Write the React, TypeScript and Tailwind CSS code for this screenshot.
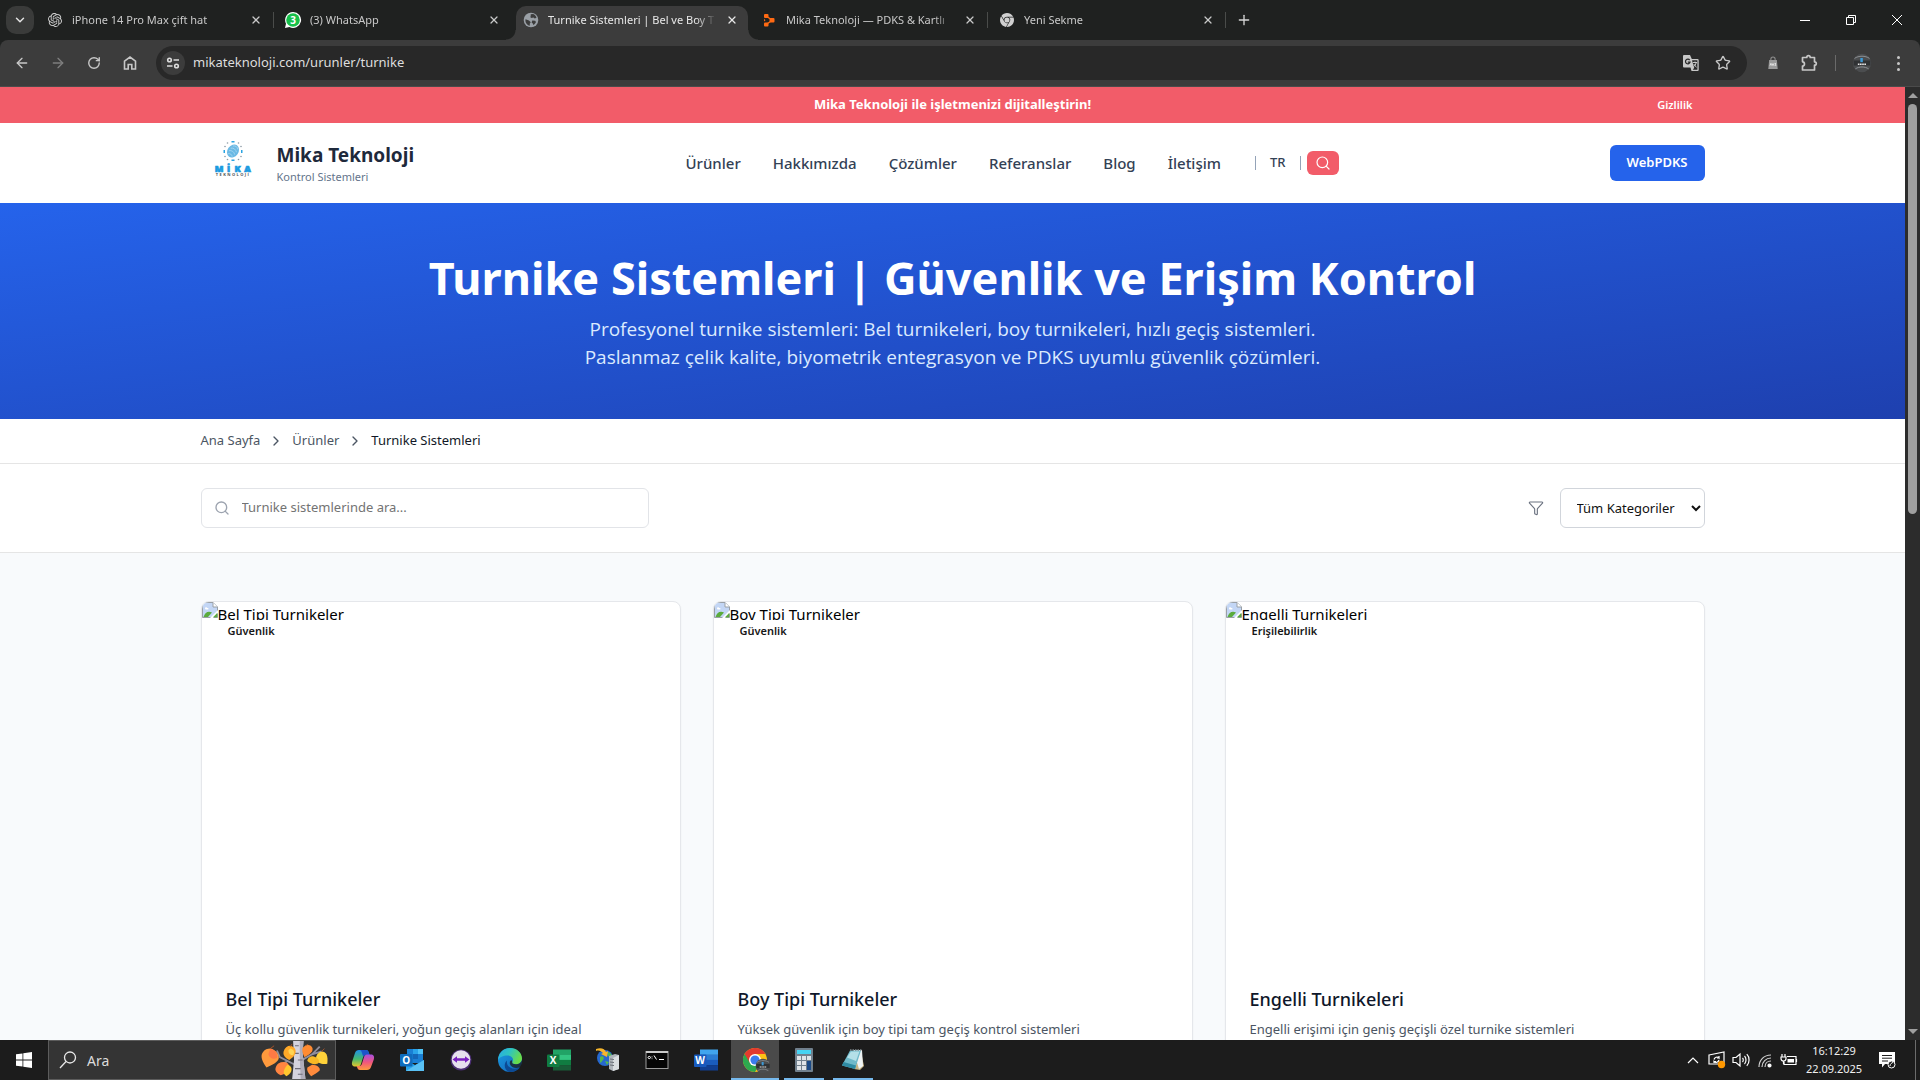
import type { ReactNode } from "react";
import { ChevronRight, Filter, Search, Star, X, ArrowLeft, ArrowRight, RotateCw, Plus, ChevronDown } from "lucide-react";
import { SiGooglechrome, SiOpenai } from "react-icons/si";

/* ---------- browser icons ---------- */

const WhatsAppIcon = () => (
  <svg viewBox="0 0 18 18" className="size-[18px]">
    <path d="M9 1a8 8 0 1 1-3.6 15.1L1 17l1-4.300A8 8 0 0 1 9 1Z" fill="#fff" />
    <circle cx="9" cy="9" r="6.800" fill="#16c04a" />
    <text x="9" y="12.500" textAnchor="middle" fontSize="10" fontWeight="700" fill="#fff" fontFamily="Noto Sans, sans-serif">3</text>
  </svg>
);

const GlobeIcon = () => (
  <svg viewBox="0 0 16 16" className="size-4">
    <circle cx="8" cy="8" r="7.300" fill="#9aa0a6" />
    <path d="M2.500 7.200 6 8.500l1.800 1.700-1 1.300v2.300C4 13 2 10.800 2.500 7.200Zm5.200-4.900 2.400-.3c1.700.6 3 2 3.400 3.700l-1.700.9-1.400-1-1.800.5-1.300-.9.400-1.300Zm1.600 6.100 2.800.3.900 1.300c-.7 1.500-1.500 2.300-2.600 2.900l-.6-1.500-1.200-1Z" fill="#3c3c3c" />
  </svg>
);

const OrangeMark = () => (
  <svg viewBox="0 0 16 16" className="size-4 fill-[#ff6a13]">
    <rect x="3" y="2" width="4.500" height="4" rx="1" />
    <rect x="3" y="10.500" width="4.500" height="4" rx="1" />
    <rect x="8.500" y="6" width="5" height="4.500" rx="1" />
    <path d="M6.500 5 9.500 7M6.500 11.500 9.500 9.500" stroke="#ff6a13" strokeWidth="1.500" />
    <path d="M3 6.800 4.500 8.200 3 9.600Z" />
  </svg>
);

const HomeIcon = () => (
  <svg viewBox="0 0 16 16" className="size-4" fill="none" stroke="currentColor" strokeWidth="1.600">
    <path d="M2.500 14V6.200L8 2l5.500 4.200V14H9.800V9.500H6.200V14Z" />
  </svg>
);

const TuneIcon = () => (
  <svg viewBox="0 0 16 16" className="size-4" fill="none" stroke="currentColor" strokeWidth="1.600">
    <circle cx="4.500" cy="5" r="1.800" />
    <path d="M8.500 5H14M2 11h5.500" />
    <circle cx="11.500" cy="11" r="1.800" />
  </svg>
);

const TranslateIcon = () => (
  <svg viewBox="0 0 18 18" className="size-[18px]">
    <path d="M2 1h6l1.800 4H15.500a1.200 1.200 0 0 1 1.200 1.200V16a1 1 0 0 1-1 1H9.500L8.500 13.500H2A1 1 0 0 1 1 12.500V2a1 1 0 0 1 1-1Z" fill="#c7c7c7" />
    <path d="M10.200 6.300h5.200v9.400h-4.600l1.400-2-2-6.500Z" fill="#282828" />
    <path d="M7.700 6.200A2.300 2.300 0 1 0 8 8.200H5.800" fill="none" stroke="#282828" strokeWidth="1.200" />
    <path d="M10.800 8.500h4.300M13 7.500v1M14.200 8.700c-.5 2-1.500 3.200-2.700 4M11.800 10c.7 1.300 1.500 2.300 2.800 3.200" fill="none" stroke="#c7c7c7" strokeWidth="1" />
  </svg>
);

const BagIcon = () => (
  <svg viewBox="0 0 14 16" className="h-3.5 w-3">
    <path d="M4.500 5V3.500a2.500 2.500 0 0 1 5 0V5" fill="none" stroke="#8b8b8b" strokeWidth="1.300" />
    <path d="M2.500 4.500h9l1 10.500h-11Z" fill="#9b9b9b" />
    <path d="M3.500 11l1-2.500 1 2.500M6 8.500l1 2.500 1-2.500M10.500 8.700H9.200l1 2.100H8.800" fill="none" stroke="#fff" strokeWidth=".8" />
  </svg>
);

const PuzzleIcon = () => (
  <svg viewBox="0 0 18 18" className="size-[18px]" fill="none" stroke="#c7c7c7" strokeWidth="1.700" strokeLinejoin="round">
    <path d="M2.500 3.500h4.300c0-2.400 3.400-2.400 3.400 0H14.500v4.300c2.400 0 2.400 3.400 0 3.400V16h-12v-4c2.600-.2 2.600-4 0-4.200Z" />
  </svg>
);

const ProfileBadge = ({ className }: { className: string }) => (
  <svg viewBox="0 0 24 24" className={className}>
    <circle cx="12" cy="12" r="11" fill="#4b4d4f" />
    <path d="M3 6.500C8 3 16 3 21 6.500M4 19c5-3 11-3 16 0" stroke="#8d9093" strokeWidth="1.200" fill="none" />
    <path d="M2 9h20v6H2Z" fill="#303234" />
    <path d="M10 6h3v5h-3Z" fill="#3c9ad8" />
    <path d="M7 13.500h10" stroke="#e6e6e6" strokeWidth="1.800" strokeDasharray="2 .6" />
  </svg>
);

const BrokenImage = () => (
  <svg viewBox="0 0 16 16" className="size-4 shrink-0">
    <path d="M.5.500H11l4.500 4.500v10.500H.5Z" fill="#c3d6f5" stroke="#9aa0a6" />
    <path d="M11 .5V5h4.500" fill="#fff" stroke="#9aa0a6" />
    <path d="M3 6.500c0-1.600 2-1.600 2.300-.5 1.300-.4 1.900 1.500.6 1.500H3.500Z" fill="#fff" />
    <path d="M1.500 15C3 10 6.500 8.500 10 10.500L6 15Z" fill="#5aab3c" />
    <path d="M8 16 16 8v3l-5 5Z" fill="#fff" />
    <path d="M11 15.200 15.200 11v4.200Z" fill="#5aab3c" />
  </svg>
);

const MikaLogo = () => (
  <svg viewBox="0 0 40 40" className="size-10" role="img" aria-label="Mika Teknoloji logo">
    <g transform="rotate(35 20 12)">
      <ellipse cx="20" cy="12" rx="5.500" ry="7" fill="#6bb9e4" />
      <path d="M17 8c2-2 4-2 6 0M16.500 11c2-2 5-2 7 0M16.500 14c2-2 5-2 7 0M17.500 17c1.500-1.500 3.500-1.500 5 0" stroke="#a5d6f0" strokeWidth=".8" fill="none" />
    </g>
    <g fill="#29a3e2">
      <rect x="18.500" y="2" width="3" height="1.500" />
      <rect x="28" y="11" width="1.500" height="3" />
      <rect x="10.500" y="11" width="1.500" height="3" />
      <rect x="18.500" y="20.500" width="3" height="1.500" />
    </g>
    <g fill="#8d9aa5">
      <circle cx="14.500" cy="4" r=".8" /><circle cx="25.500" cy="4" r=".8" /><circle cx="12" cy="7.500" r=".8" /><circle cx="28" cy="7.500" r=".8" />
      <circle cx="12" cy="17.500" r=".8" /><circle cx="28" cy="17.500" r=".8" /><circle cx="14.500" cy="20.500" r=".8" /><circle cx="25.500" cy="20.500" r=".8" />
    </g>
    <g fill="#1b9be0" stroke="#1b9be0" strokeWidth=".7" fontFamily="Open Sans, sans-serif" fontWeight="800" fontSize="9" textAnchor="middle">
      <text x="6" y="32.500">M</text><text x="15.500" y="32.500">İ</text><text x="24.500" y="32.500">K</text><text x="34.500" y="32.500">A</text>
    </g>
    <text x="20" y="37" textAnchor="middle" fontFamily="Open Sans, sans-serif" fontWeight="700" fontSize="4" letterSpacing="1.400" fill="#4a4f55">TEKNOLOJİ</text>
  </svg>
);

/* ---------- taskbar icons ---------- */

const StartIcon = () => (
  <svg viewBox="0 0 16 16" className="size-4 fill-white">
    <path d="M0 2.300 6.500 1.400v6.200H0ZM7.300 1.300 16 0v7.600H7.300ZM0 8.400h6.500v6.200L0 13.700ZM7.300 8.400H16V16l-8.700-1.300Z" />
  </svg>
);

const TreeArt = () => (
  <svg viewBox="0 0 72 40" className="h-full w-[72px]">
    <g stroke="#8f8d9c" strokeWidth="2" fill="none">
      <path d="M36 25 20 17l-3-7M40 22l14-8 8-8M54 14l10-3M28 21l-6 4" />
    </g>
    <path d="M34 0h11l-1 12 3 28H33l2-20Z" fill="#d5d3de" />
    <path d="M41 0h4l-1 12 3 28h-5l-1-24Z" fill="#aeacba" />
    <path d="M36 5h4M35 13h5M39 20h5M36 29h6M39 35h5" stroke="#6e6c7a" strokeWidth="1.300" />
    <path d="M10 8c5 1 9 5 9 10-1 5-7 7-13 10C2 22-1 16 2 12c2-3 5-4 8-4Z" fill="#ff9a3d" />
    <path d="M10 8c6 2 8 6 7 10-4 2-8 0-9-4Z" fill="#ff7a45" />
    <path d="M31 5c5 1 7 5 5 9-1 3-4 4-6 6-4-2-7-5-6-9 1-4 4-6 7-6Z" fill="#ffa928" />
    <path d="M31 8c4 1 5 4 3 7-3 0-5-2-5-5Z" fill="#ffd454" />
    <path d="M24 22c4 0 7 3 6 7-1 4-5 6-9 7-4-2-7-5-5-9 1-3 4-5 8-5Z" fill="#ff8440" />
    <path d="M28 25c4 1 5 4 4 7-1 2-3 4-5 5-4-2-4-6 1-12Z" fill="#ffc72e" />
    <path d="M48 4c5 0 8 3 6 7-2 3-5 4-8 6-2-4-3-8-2-10Z" fill="#ff8b32" />
    <path d="M64 11c5 0 7 4 6 13-6 1-11-1-12-5 0-4 2-7 6-8Z" fill="#ffd23a" />
    <path d="M55 16c4 1 7 3 6 7-3 3-9 1-12-2 0-3 3-5 6-5Z" fill="#f7b824" />
    <path d="M54 25c5 0 9 3 8 6-3 3-6 4-9 6-3-3-5-6-4-9Z" fill="#ff8a3c" />
    <path d="M10 8l4-3M31 6l2-3M48 5l2-2M64 11l3-3" stroke="#a8552a" strokeWidth="1" />
  </svg>
);

const CopilotIcon = () => (
  <svg viewBox="0 0 24 24" className="size-6">
    <defs>
      <linearGradient id="cpA" x1="0" y1="0" x2="0" y2="1"><stop offset="0" stopColor="#1f8fe8" /><stop offset=".55" stopColor="#46b96e" /><stop offset="1" stopColor="#e7c62b" /></linearGradient>
      <linearGradient id="cpB" x1="0" y1="0" x2="0" y2="1"><stop offset="0" stopColor="#a54fe0" /><stop offset=".5" stopColor="#f0567e" /><stop offset="1" stopColor="#ff9a3d" /></linearGradient>
    </defs>
    <path d="M8 2h7c2 0 2.500 1.500 3 3l.5 2H15c-2 0-2.500 1-3 2.500l-2 6.500c-.5 1.500-1.500 2.500-3 2.500H4c-3 0-3.500-2.500-2.800-5L4 5c.6-2 2-3 4-3Z" fill="url(#cpA)" />
    <path d="M8 2h7c2 0 2.500 1.500 3 3l.5 2H15c-1.500 0-2.300.6-2.800 1.800L11 5c-.5-2-1-3-3-3Z" fill="#1c55c9" />
    <path d="M16 22H9c-2 0-2.500-1.500-3-3l-.3-1H8c2 0 2.500-1 3-2.500l2-6.500c.5-1.500 1.500-2.500 3-2.500h4c3 0 3.500 2.500 2.800 5L20 19c-.6 2-2 3-4 3Z" fill="url(#cpB)" />
  </svg>
);

const LetterTile = ({ letter, tile, bands }: { letter: string; tile: string; bands: string[] }) => (
  <svg viewBox="0 0 24 24" className="size-6">
    {bands.map((c, i) => <rect key={c} x="6" y={1.500 + i * 5.200} width="18" height="5.400" fill={c} />)}
    <rect x="0" y="6.500" width="12.500" height="12.500" rx="1" fill={tile} />
    <text x="6.200" y="16.300" textAnchor="middle" fontSize="10" fontWeight="700" fill="#fff" fontFamily="Open Sans, sans-serif">{letter}</text>
  </svg>
);

const OutlookIcon = () => (
  <svg viewBox="0 0 24 24" className="size-6">
    <path d="M7 1h16v14H7Z" fill="#1a7fd4" />
    <path d="M13 1h5v5h-5Z" fill="#2aa4ea" /><path d="M18 1h5v5h-5Z" fill="#4fc3f7" /><path d="M13 6h5v5h-5Z" fill="#1466b8" />
    <path d="M6 12l9 5 9-5v11H6Z" fill="#2aa4ea" /><path d="M6 23 24 12v11Z" fill="#59c1f5" />
    <rect x="0" y="6" width="12.500" height="12.500" rx="1" fill="#0f6cbd" />
    <text x="6.200" y="15.800" textAnchor="middle" fontSize="10" fontWeight="700" fill="#fff" fontFamily="Open Sans, sans-serif">O</text>
  </svg>
);

const TeamViewerIcon = () => (
  <svg viewBox="0 0 24 24" className="size-6">
    <circle cx="12" cy="12" r="10.500" fill="#4a2d73" />
    <circle cx="12" cy="11.500" r="9.300" fill="#e6e0ee" />
    <path d="M3.500 11.500 8 8.300v2h8v-2l4.500 3.200L16 14.700v-2H8v2Z" fill="#7a1fc0" />
  </svg>
);

const EdgeIcon = () => (
  <svg viewBox="0 0 24 24" className="size-6">
    <defs>
      <linearGradient id="edA" x1="0" y1="0" x2="1" y2=".4"><stop offset="0" stopColor="#28a9e8" /><stop offset=".5" stopColor="#2fc4c0" /><stop offset="1" stopColor="#69dc4a" /></linearGradient>
      <linearGradient id="edB" x1="0" y1="0" x2="1" y2="1"><stop offset="0" stopColor="#1b9de2" /><stop offset="1" stopColor="#1262b8" /></linearGradient>
    </defs>
    <circle cx="12" cy="12" r="12" fill="url(#edB)" />
    <path d="M.3 10C1.500 4 6 0 12 0c7 0 12 5 12 10.500 0 3.500-2.800 5.800-6 5.800-3 0-4.300-1.200-3.700-2.300 2-3-.3-6.500-4.800-6.500C5 7.500 1.500 9 .3 12Z" fill="url(#edA)" />
    <path d="M9 12.500c-1 5.500 4 9.500 10.500 7.800 1-.3 2-.8 2.500-1-2.500 3.800-7 5-11 4.600C6 22 5.500 15.500 9 12.500Z" fill="#0c4a94" />
    <path d="M14.300 14c-.6 1.100.7 2.300 3.700 2.300 2.700 0 5-1.600 5.800-4 .3 2.500-.3 5-1.800 7-4 1.800-9 .5-10-3-.7-2 .3-3.800 1.500-4.300Z" fill="#1c1c1c" fillOpacity=".75" />
  </svg>
);

const ServerIcon = () => (
  <svg viewBox="0 0 24 24" className="size-6">
    <circle cx="9" cy="10" r="8" fill="#2668cf" />
    <path d="M4 9c3-2 5 1 3 3s-2 4-3 2Zm7-5c3 0 5 2 5 5l-4-1Zm-2 9 4 1-2 3Z" fill="#52b84c" />
    <path d="M0 1c5-2 9 0 10 3l2-1-1 6-6-3 2-1C5 3 3 2 0 3Z" fill="#f6b62c" />
    <path d="M13 8l6-2 4 1v14l-6 2-4-2Z" fill="#aeb4ba" /><path d="M19 9l4-2v14l-6 2V10Z" fill="#d9dde0" />
    <path d="M14 11l4 .5M14 14l4 .5M14 17l4 .5" stroke="#6a7077" />
  </svg>
);

const TerminalIcon = () => (
  <svg viewBox="0 0 24 24" className="size-6">
    <rect x="1" y="3.500" width="22" height="17" fill="#050505" stroke="#9c9c9c" />
    <path d="M1 3h22v2H1Z" fill="#c9c9c9" />
    <path d="M3 9.500c0-1.500 2.500-1.500 2.500 0M3 9.500c0 1.500 2.500 1.500 2.500 0M7 8.500v.8M7 10.500v.6M9 7.500l2.500 4M14 11.500h5" stroke="#fff" fill="none" />
  </svg>
);

const ChromeIcon = () => (
  <div className="relative">
    <svg viewBox="0 0 24 24" className="size-6">
      <circle cx="12" cy="12" r="12" fill="#fbc116" />
      <path d="M12 12 1.600 6A12 12 0 0 0 12 24l5.200-9Z" fill="#2da94f" />
      <path d="M1.600 6A12 12 0 0 1 22.400 6H12L7 15Z" fill="#e33b2e" />
      <circle cx="12" cy="12" r="6" fill="#fff" /><circle cx="12" cy="12" r="4.600" fill="#3b7ded" />
    </svg>
    <ProfileBadge className="absolute -right-1 -bottom-0.5 size-4" />
  </div>
);

const CalculatorIcon = () => (
  <svg viewBox="0 0 24 24" className="size-6">
    <rect x="3" width="18" height="24" rx="1" fill="#71808d" />
    <rect x="5" y="2" width="14" height="4" fill="#46d3f2" />
    <g fill="#dfe4e8">
      {[8, 13, 18].map((y) => [5, 10].map((x) => <rect key={`${x}-${y}`} x={x} y={y} width="4" height="4" />))}
      <rect x="15" y="8" width="4" height="4" />
    </g>
    <rect x="15" y="13" width="4" height="9" fill="#1b4a86" />
  </svg>
);

const NotepadIcon = () => (
  <svg viewBox="0 0 24 24" className="size-6">
    <path d="M20 4l3 14-4 4-6-1Z" fill="#c8b483" />
    <path d="M12 2h9l1 16-4 3Z" fill="#eef3f4" />
    <path d="M9 2.500h11L14 21 1 17.500Z" fill="#6fb9c9" /><path d="M10 3.500h8.500L15 13l-9-3.500Z" fill="#b4e0e8" />
    <path d="M1 17.500 14 21l1-3.500L2.500 14Z" fill="#2f8ba3" />
    <path d="M9 2h12" stroke="#7c8488" strokeWidth="1.500" strokeDasharray="1.500 1" />
  </svg>
);

const stroke = { fill: "none", stroke: "#fff", strokeWidth: 1.2 } as const;

const MeetIcon = () => (
  <svg viewBox="0 0 18 18" className="size-[18px]">
    <path d="M1 4 16 1v12H1Z" {...stroke} />
    <path d="M6 8.500A3 3 0 0 1 11 7V5M11 7H9M11 9a3 3 0 0 1-5 1.500V12M6 10.500h2" {...stroke} />
    <circle cx="13.500" cy="13.500" r="3.700" fill="#ff9800" />
  </svg>
);
const SpeakerIcon = () => (
  <svg viewBox="0 0 18 18" className="size-[18px]" {...stroke}>
    <path d="M1 6.500h3L8 3v12l-4-3.500H1ZM10.500 7c1 1 1 3 0 4M12.500 5c2 2 2 6 0 8M14.800 3.200c3 3 3 8.600 0 11.600" />
  </svg>
);
const WifiIcon = () => (
  <svg viewBox="0 0 18 18" className="size-[18px]" {...stroke}>
    <path d="M3 16C3 9 8 4 15 4M6 16c0-5 4-9 9-9M9 16c0-3.500 2.500-6 6-6" stroke="#d0d0d0" />
    <circle cx="13.500" cy="14.500" r="1.500" fill="#fff" />
  </svg>
);
const BatteryIcon = () => (
  <svg viewBox="0 0 18 18" className="size-[18px]" {...stroke}>
    <path d="M7 5.500h9v8H4V11M16.500 8v3" /><path d="M7.500 8H14v3.500H7.500Z" fill="#fff" stroke="none" />
    <path d="M2 3v2.500M5 3v2.500M1 6h5v1.500a2.500 2.500 0 0 1-5 0ZM3.500 10v3" />
  </svg>
);
const NotificationIcon = () => (
  <svg viewBox="0 0 18 18" className="size-[18px]">
    <path d="M1 1h16v12H7l-3 3.500V13H1Z" fill="#fff" />
    <path d="M4 4.500h10M4 7.200h10M4 10h6" stroke="#1c1c1c" />
    <circle cx="13.500" cy="13.500" r="3.500" fill="#1c1c1c" stroke="#fff" /><path d="M12 15c0-2 2-3.500 3-3.500" stroke="#fff" />
  </svg>
);

/* ---------- browser chrome ---------- */

type Tab = { title: string; icon: ReactNode; active?: boolean; divider?: boolean };

const tabs: Tab[] = [
  { title: "iPhone 14 Pro Max çift hat", icon: <SiOpenai className="size-3.5 text-[#d0d0d0]" />, divider: true },
  { title: "(3) WhatsApp", icon: <WhatsAppIcon /> },
  { title: "Turnike Sistemleri | Bel ve Boy T", icon: <GlobeIcon />, active: true },
  { title: "Mika Teknoloji — PDKS & Kartlı", icon: <OrangeMark />, divider: true },
  { title: "Yeni Sekme", icon: <SiGooglechrome className="size-3.5 text-[#d0d0d0]" />, divider: true },
];

function TabItem({ tab }: { tab: Tab }) {
  return (
    <div
      className={
        tab.active
          ? "relative flex h-[34px] w-[238px] items-center pr-1.5 pb-1.5 text-[#e8e8e8] before:absolute before:bottom-0 before:-left-2.5 before:size-2.5 before:bg-[radial-gradient(circle_at_0_0,transparent_9px,#3c3c3c_10px)] after:absolute after:-right-1 after:bottom-0 after:size-2.5 after:bg-[radial-gradient(circle_at_100%_0,transparent_9px,#3c3c3c_10px)]"
          : "flex h-[34px] w-[238px] items-center pb-1.5 text-[#c9c9c9]"
      }
    >
      {tab.active && <span className="absolute inset-y-0 left-0 w-[232px] rounded-t-[10px] bg-[#3c3c3c]" />}
      <span className="relative ml-1.5 flex w-[18px] justify-center">{tab.icon}</span>
      <span className="relative ml-2 w-[166px] text-[11px] whitespace-nowrap [mask-image:linear-gradient(to_right,#000_148px,transparent_168px)]">{tab.title}</span>
      <button aria-label={`Kapat: ${tab.title}`} className="relative ml-2.5 flex size-4 items-center justify-center">
        <X className="size-3" strokeWidth={2.5} />
      </button>
      {tab.divider && <span className="mr-1 ml-auto h-4 w-px bg-[#4a4c4a]" />}
    </div>
  );
}

function TabStrip() {
  return (
    <div className="flex h-10 shrink-0 items-end bg-[#1f2120]">
      <button aria-label="Sekmelerde ara" className="mr-1.5 mb-1.5 ml-1.5 flex size-7 items-center justify-center rounded-[10px] bg-[#3a3b3a] text-[#e3e3e3]">
        <ChevronDown className="size-3.5" strokeWidth={2.5} />
      </button>
      {tabs.map((t) => <TabItem key={t.title} tab={t} />)}
      <button aria-label="Yeni sekme" className="mb-1.5 flex size-7 items-center justify-center text-[#d6d6d6]">
        <Plus className="size-4" />
      </button>
      <div className="ml-auto flex h-10 text-white">
        <button aria-label="Simge durumuna küçült" className="flex w-[46px] items-center justify-center"><span className="h-px w-2.5 bg-white" /></button>
        <button aria-label="Önceki boyut" className="flex w-[46px] items-center justify-center">
          <svg viewBox="0 0 10 10" className="size-2.5" fill="none" stroke="#fff"><path d="M.5 2.500h7v7h-7ZM2.500 2.500v-2h7v7h-2" /></svg>
        </button>
        <button aria-label="Kapat" className="flex w-[46px] items-center justify-center">
          <svg viewBox="0 0 10 10" className="size-2.5" fill="none" stroke="#fff"><path d="M0 0l10 10M10 0 0 10" /></svg>
        </button>
      </div>
    </div>
  );
}

function Toolbar() {
  return (
    <div className="bg-[#1f2120]">
      <div className="flex h-[47px] shrink-0 items-center rounded-t-lg border-b border-[#4b4b4b] bg-[#3c3c3c] pl-1 text-[#c7c7c7]">
        <button aria-label="Geri" className="flex w-9 justify-center"><ArrowLeft className="size-4" /></button>
        <button aria-label="İleri" className="flex w-9 justify-center text-[#7e7e7e]"><ArrowRight className="size-4" /></button>
        <button aria-label="Yenile" className="flex w-9 justify-center"><RotateCw className="size-3.5" strokeWidth={2.4} /></button>
        <button aria-label="Ana sayfa" className="flex w-9 justify-center"><HomeIcon /></button>
        <div className="ml-2 flex h-[34px] flex-1 items-center rounded-full bg-[#282828] pr-2 pl-[5px]">
          <button aria-label="Site bilgileri" className="flex size-6 items-center justify-center rounded-full bg-[#3c3c3c] text-[#dcdcdc]"><TuneIcon /></button>
          <input aria-label="Adres çubuğu" readOnly defaultValue="mikateknoloji.com/urunler/turnike" className="ml-2 min-w-0 flex-1 bg-transparent text-[13px] text-[#dedede] outline-none" />
          <button aria-label="Çevir" className="flex w-8 justify-center"><TranslateIcon /></button>
          <button aria-label="Yer işareti ekle" className="flex w-8 justify-center"><Star className="size-4" /></button>
        </div>
        <button aria-label="Alışveriş uzantısı" className="ml-2 flex w-9 justify-center"><BagIcon /></button>
        <button aria-label="Uzantılar" className="flex w-9 justify-center"><PuzzleIcon /></button>
        <span className="ml-2 h-4 w-px bg-[#6a6a6a]" />
        <button aria-label="Profil" className="ml-2 flex w-9 justify-center"><ProfileBadge className="size-5" /></button>
        <button aria-label="Menü" className="mr-1 flex w-9 flex-col items-center gap-[3px]">
          <span className="size-[3px] rounded-full bg-[#c7c7c7]" /><span className="size-[3px] rounded-full bg-[#c7c7c7]" /><span className="size-[3px] rounded-full bg-[#c7c7c7]" />
        </button>
      </div>
    </div>
  );
}

/* ---------- page ---------- */

const container = "mx-auto w-full max-w-[1536px] px-4";
const navLinks = ["Ürünler", "Hakkımızda", "Çözümler", "Referanslar", "Blog", "İletişim"];
const cards = [
  { title: "Bel Tipi Turnikeler", badge: "Güvenlik", text: "Üç kollu güvenlik turnikeleri, yoğun geçiş alanları için ideal" },
  { title: "Boy Tipi Turnikeler", badge: "Güvenlik", text: "Yüksek güvenlik için boy tipi tam geçiş kontrol sistemleri" },
  { title: "Engelli Turnikeleri", badge: "Erişilebilirlik", text: "Engelli erişimi için geniş geçişli özel turnike sistemleri" },
];

function SiteHeader() {
  return (
    <>
      <div className="bg-[#f25c69] text-white">
        <div className={`${container} grid h-9 grid-cols-[1fr_auto_1fr] items-center`}>
          <p className="col-start-2 text-[13px] font-bold">Mika Teknoloji ile işletmenizi dijitalleştirin!</p>
          <a href="#gizlilik" className="mr-3 justify-self-end text-[11px] font-semibold">Gizlilik</a>
        </div>
      </div>
      <header className="bg-white">
        <div className={`${container} flex h-20 items-center`}>
          <a href="#anasayfa" className="flex w-[485px] items-center">
            <span className="mr-6 ml-3 flex pb-2"><MikaLogo /></span>
            <span className="flex flex-col pt-1">
              <span className="text-[19px] leading-6 font-bold text-[#1e293b]">Mika Teknoloji</span>
              <span className="text-[11px] leading-5 text-[#64748b]">Kontrol Sistemleri</span>
            </span>
          </a>
          <nav className="flex items-center gap-8 text-[15px] font-medium text-[#334155]">
            {navLinks.map((n) => <a key={n} href={`#${n}`}>{n}</a>)}
          </nav>
          <div className="ml-[34px] flex items-center text-[13px] font-medium text-[#334155]">
            <span className="h-3.5 w-px bg-[#94a3b8]" />
            <button className="px-3.5">TR</button>
            <span className="h-3.5 w-px bg-[#94a3b8]" />
            <button aria-label="Ara" className="ml-1.5 flex h-6 w-8 items-center justify-center rounded-md bg-[#f25c69] text-white"><Search className="size-4" strokeWidth={1.8} /></button>
          </div>
          <a href="#webpdks" className="ml-auto flex h-9 items-center rounded-md bg-[#2563eb] px-[17px] text-[13px] font-semibold text-white">WebPDKS</a>
        </div>
      </header>
    </>
  );
}

function Hero() {
  return (
    <section className="bg-[linear-gradient(to_bottom_right,#2563eb,#1e40af)] py-12 text-center text-white">
      <h1 className="mb-2.5 text-[45px] leading-[54px] font-bold">Turnike Sistemleri | Güvenlik ve Erişim Kontrol</h1>
      <p className="mx-auto max-w-3xl font-['Open_Sans'] text-[19px] leading-7 text-[#dbeafe]">
        Profesyonel turnike sistemleri: Bel turnikeleri, boy turnikeleri, hızlı geçiş sistemleri.<br />
        Paslanmaz çelik kalite, biyometrik entegrasyon ve PDKS uyumlu güvenlik çözümleri.
      </p>
    </section>
  );
}

function Breadcrumb() {
  return (
    <div className="border-b border-[#e5e5e5] bg-white">
      <nav aria-label="Sayfa yolu" className={`${container} flex h-11 items-center text-[13px] text-[#4b5563]`}>
        <a href="#anasayfa">Ana Sayfa</a>
        <ChevronRight className="mx-2 size-4" />
        <a href="#urunler">Ürünler</a>
        <ChevronRight className="mx-2 size-4" />
        <span className="text-[#111827]">Turnike Sistemleri</span>
      </nav>
    </div>
  );
}

function FilterBar() {
  return (
    <div className="border-b border-[#e5e5e5] bg-white">
      <div className={`${container} flex items-center justify-between py-6`}>
        <label className="flex h-10 w-full max-w-md items-center gap-3 rounded-md border border-[#e2e4e8] bg-white px-3">
          <Search className="size-4 text-[#9ca3af]" />
          <input type="text" aria-label="Turnike sistemlerinde ara" placeholder="Turnike sistemlerinde ara..." className="min-w-0 flex-1 text-[13px] outline-none placeholder:text-[#737373]" />
        </label>
        <div className="flex items-center gap-4">
          <Filter className="size-4 text-[#6b7280]" strokeWidth={1.7} />
          <select aria-label="Kategori" className="h-10 w-[145px] rounded-md border border-[#d1d5db] bg-white px-3 text-[13px] text-[#111]">
            <option>Tüm Kategoriler</option>
          </select>
        </div>
      </div>
    </div>
  );
}

function ProductCard({ title, badge, text }: { title: string; badge: string; text: string }) {
  return (
    <article className="overflow-hidden rounded-lg border border-[#e5e7eb] bg-white shadow-xs">
      <div className="relative aspect-4/3">
        <div className="flex h-6 items-start text-[15px] text-black">
          <BrokenImage />
          <span className="leading-6">{title}</span>
        </div>
        <span className="absolute top-[18px] left-4 rounded-full bg-white px-2.5 py-0.5 text-[11px] leading-[18px] font-semibold text-[#171717]">{badge}</span>
      </div>
      <div className="p-6">
        <h2 className="mb-1.5 text-[18px] leading-7 font-medium text-[#0f172a]">{title}</h2>
        <p className="text-[13px] leading-5 text-[#4b5563]">{text}</p>
      </div>
    </article>
  );
}

function Scrollbar() {
  return (
    <div className="flex w-[15px] shrink-0 flex-col items-center bg-[#2c2c2c] py-1.5">
      <span className="border-x-[5px] border-b-[5px] border-x-transparent border-b-[#9f9f9f]" />
      <span className="mt-1.5 h-[38vh] w-[9px] rounded-full bg-[#9f9f9f]" />
      <span className="mt-auto border-x-[5px] border-t-[5px] border-x-transparent border-t-[#9f9f9f]" />
    </div>
  );
}

/* ---------- taskbar ---------- */

const apps: { name: string; icon: ReactNode; state?: "open" | "focused" }[] = [
  { name: "Copilot", icon: <CopilotIcon /> },
  { name: "Outlook", icon: <OutlookIcon /> },
  { name: "TeamViewer", icon: <TeamViewerIcon /> },
  { name: "Edge", icon: <EdgeIcon /> },
  { name: "Excel", icon: <LetterTile letter="X" tile="#107c41" bands={["#21a366", "#33c481", "#107c41", "#185c37"]} /> },
  { name: "Sunucu", icon: <ServerIcon /> },
  { name: "Komut İstemi", icon: <TerminalIcon /> },
  { name: "Word", icon: <LetterTile letter="W" tile="#185abd" bands={["#41a5ee", "#2b7cd3", "#1a5dbe", "#103f91"]} /> },
  { name: "Chrome", icon: <ChromeIcon />, state: "focused" },
  { name: "Hesap Makinesi", icon: <CalculatorIcon />, state: "open" },
  { name: "Not Defteri", icon: <NotepadIcon />, state: "open" },
];

function Taskbar() {
  return (
    <footer className="flex h-10 shrink-0 items-stretch bg-[#1c1c1c] text-white">
      <button aria-label="Başlat" className="flex w-12 items-center justify-center"><StartIcon /></button>
      <button className="flex w-72 items-center border border-[#5c5c5c] bg-[#343434] pl-2.5">
        <svg viewBox="0 0 18 18" className="size-[18px]" fill="none" stroke="#e8e8e8" strokeWidth="1.300"><circle cx="11" cy="6.500" r="5.500" /><path d="M7 10.500 1 17" /></svg>
        <span className="ml-2.5 text-[14px] text-[#dcdcdc]">Ara</span>
        <span className="ml-auto flex h-full pr-1"><TreeArt /></span>
      </button>
      <div className="ml-[3px] flex gap-px">
        {apps.map((a) => (
          <button
            key={a.name}
            aria-label={a.name}
            className={
              a.state === "focused"
                ? "flex w-12 items-center justify-center border-b-2 border-[#76b9ed] bg-[#4a4a4a] pt-0.5"
                : "relative flex w-12 items-center justify-center"
            }
          >
            {a.icon}
            {a.state === "open" && <span className="absolute inset-x-1 bottom-0 h-0.5 bg-[#76b9ed]" />}
          </button>
        ))}
      </div>
      <div className="ml-auto flex items-center">
        <button aria-label="Gizli simgeler" className="flex w-6 justify-center">
          <svg viewBox="0 0 12 8" className="h-2 w-3" {...stroke}><path d="M1 7l5-5 5 5" /></svg>
        </button>
        <span className="flex w-6 justify-center"><MeetIcon /></span>
        <span className="flex w-6 justify-center"><SpeakerIcon /></span>
        <span className="flex w-6 justify-center"><WifiIcon /></span>
        <span className="flex w-6 justify-center"><BatteryIcon /></span>
        <div className="flex w-[66px] flex-col items-center text-[11px] leading-[18px] text-[#f0f0f0]">
          <span>16:12:29</span>
          <span>22.09.2025</span>
        </div>
        <button aria-label="Bildirimler" className="flex w-10 justify-center"><NotificationIcon /></button>
        <span className="ml-2 h-10 w-px bg-[#6b6b6b]" />
        <span className="w-1" />
      </div>
    </footer>
  );
}

export default function App() {
  return (
    <div className="flex h-screen flex-col overflow-hidden font-['Noto_Sans',sans-serif]">
      <TabStrip />
      <Toolbar />
      <div className="flex min-h-0 flex-1">
        <main className="min-w-0 flex-1 overflow-hidden bg-[#f8fafc]">
          <SiteHeader />
          <Hero />
          <Breadcrumb />
          <FilterBar />
          <section className={`${container} grid grid-cols-3 gap-8 py-12`}>
            {cards.map((c) => <ProductCard key={c.title} {...c} />)}
          </section>
        </main>
        <Scrollbar />
      </div>
      <Taskbar />
    </div>
  );
}
